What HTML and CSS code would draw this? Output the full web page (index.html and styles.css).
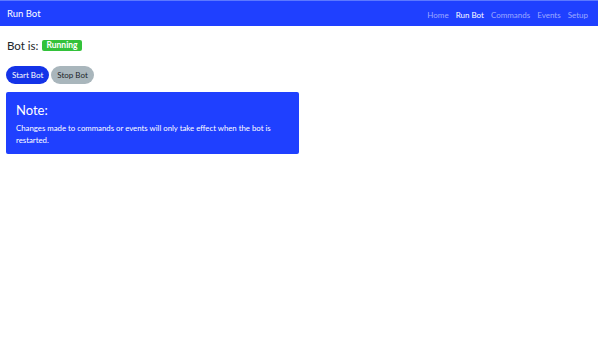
FILE: index.html
```html
<!DOCTYPE html>
<html>

<head>
    <title>Run Bot</title>
    <link rel="stylesheet" href="styles.css">
</head>

<body>
    <nav class="navbar">
        <a class="brand" href="#">Run Bot</a>
        <ul class="nav-links">
            <li><a href="#">Home</a></li>
            <li><a class="active" href="#">Run Bot</a></li>
            <li><a href="#">Commands</a></li>
            <li><a href="#">Events</a></li>
            <li><a href="#">Setup</a></li>
        </ul>
    </nav>

    <div class="container">
        <h3 class="status">Bot is: <span class="badge">Running</span></h3>

        <div class="buttons">
            <button class="btn btn-primary">Start Bot</button>
            <button class="btn btn-secondary">Stop Bot</button>
        </div>

        <div class="note">
            <h4>Note:</h4>
            <p>Changes made to commands or events will only take effect when the bot is restarted.</p>
        </div>
    </div>
</body>

</html>
```

FILE: styles.css
```css
body {
    margin: 0;
    font-family: Lato, "Noto Sans", sans-serif;
    background-color: #ffffff;
    color: #212529;
}

.navbar {
    display: flex;
    align-items: center;
    justify-content: space-between;
    height: 25px;
    padding: 0 10px 0 7px;
    background-color: #1f40ff;
    border-top: 1px solid #5c78ff;
    line-height: 12px;
}

.brand {
    color: #ffffff;
    font-size: 9.5px;
    text-decoration: none;
}

.nav-links {
    display: flex;
    align-items: center;
    gap: 7px;
    list-style: none;
    margin: 0;
    padding: 0;
}

.nav-links li {
    line-height: 12px;
}

.nav-links a {
    color: rgba(255, 255, 255, 0.55);
    font-size: 8px;
    text-decoration: none;
}

.nav-links a.active {
    color: #ffffff;
}

.container {
    padding: 0 6px;
}

.status {
    display: flex;
    align-items: center;
    gap: 4px;
    margin: 0;
    padding: 13px 1px 0;
    height: 26px;
    box-sizing: border-box;
    font-size: 11.5px;
    font-weight: normal;
    line-height: 14px;
}

.badge {
    padding: 0 4px;
    background-color: #33c23a;
    color: #ffffff;
    font-size: 8.5px;
    font-weight: bold;
    line-height: 11px;
    border-radius: 2px;
}

.buttons {
    display: flex;
    gap: 2px;
    margin: 14px 0 8px;
}

.btn {
    height: 18px;
    padding: 0 6px;
    font-family: inherit;
    font-size: 8px;
    border: none;
    border-radius: 9px;
}

.btn-primary {
    background-color: #1433e8;
    color: #ffffff;
}

.btn-secondary {
    background-color: #a9b6bc;
    color: #212529;
}

.note {
    width: 275px;
    padding: 10px 8px 8px 10px;
    background-color: #1f40ff;
    color: #ffffff;
    border-radius: 2px;
}

.note h4 {
    margin: 0 0 4px;
    font-size: 13px;
    font-weight: normal;
    line-height: 16px;
}

.note p {
    margin: 0;
    font-size: 7.8px;
    line-height: 12px;
}
```
